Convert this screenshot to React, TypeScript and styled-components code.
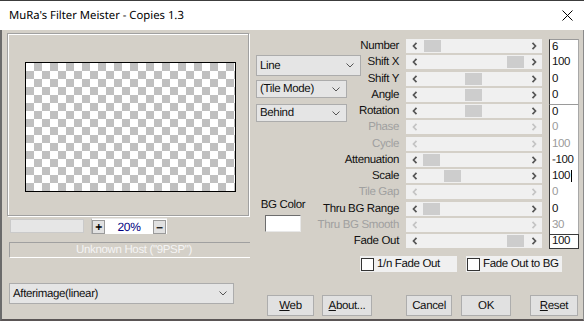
import React from "react";
import styled, { createGlobalStyle, css } from "styled-components";

const Global = createGlobalStyle`
  html, body { margin: 0; padding: 0; background: #d4d0c8; }
  body { width: 584px; height: 321px; overflow: hidden; }
  * { box-sizing: border-box; }
`;

const Window = styled.div`
  width: 584px;
  height: 321px;
  display: flex;
  flex-direction: column;
  background: #d4d0c8;
  overflow: hidden;
  font-family: "Liberation Sans", Arial, sans-serif;
  font-size: 11.5px;
  letter-spacing: -0.35px;
  text-rendering: geometricPrecision;
  color: #111;
`;

const TitleBar = styled.div`
  height: 30px;
  flex: none;
  background: #fff;
  border-top: 1px solid #3c3c3c;
  display: flex;
  align-items: center;
  justify-content: space-between;
  padding: 0 11px 0 9px;
`;

const Title = styled.span`
  font-family: "Noto Sans", sans-serif;
  font-size: 11.3px;
  letter-spacing: 0;
  color: #000;
`;

const Body = styled.div`
  flex: 1;
  display: flex;
  border-left: 2px solid #6b6b6b;
  border-right: 1px solid #8a8a8a;
  border-bottom: 2px solid #5a5555;
  padding-top: 3px;
`;

/* ---------- left column ---------- */
const LeftCol = styled.div`
  width: 243px;
  margin-left: 5px;
  flex: none;
  display: flex;
  flex-direction: column;
`;

const PreviewFrame = styled.div`
  width: 242px;
  height: 183px;
  border: 1px solid #a0a0a0;
  box-shadow: inset 1px 1px 0 #fff, 1px 1px 0 #fff;
  padding: 28px 0 0 17px;
`;

const Checker = styled.div`
  width: 211px;
  height: 130px;
  border: 1px solid #000;
  background: repeating-conic-gradient(#c0c0c0 0 25%, #fff 0 50%) 0 0 / 16px 16px;
`;

const ZoomRow = styled.div`
  margin-top: 2px;
  height: 16px;
  display: flex;
  align-items: center;
`;

const BlankField = styled.div`
  margin-left: 3px;
  width: 74px;
  height: 14px;
  background: #e6e6e6;
  border: 1px solid #cacaca;
`;

const ZoomCtl = styled.div`
  margin-left: 7px;
  width: 76px;
  height: 16px;
  background: #fff;
  border-left: 1px solid #b8b8b8;
  border-top: 1px solid #e8e8e8;
  display: flex;
  align-items: center;
  padding: 0 1px 0 0;
`;

const TinyBtn = styled.div`
  width: 13px;
  height: 14px;
  flex: none;
  background: #e1e1e1;
  border: 1px solid #9a9a9a;
  display: flex;
  align-items: center;
  justify-content: center;
  font-weight: bold;
  font-size: 12px;
  line-height: 1;
  color: #000;
`;

const ZoomText = styled.span`
  flex: 1;
  text-align: center;
  color: #000080;
  font-size: 12px;
`;

const HostField = styled.div`
  margin: 8px 0 0 2px;
  width: 241px;
  height: 16px;
  border-top: 1px solid #a0a0a0;
  border-left: 1px solid #a0a0a0;
  border-bottom: 1px solid #fff;
  color: #f4f4f4;
  text-align: center;
  line-height: 14px;
  padding-left: 8px;
  white-space: nowrap;
`;

const Select = styled.div<{ $w: number; $h: number; $mt: number; $ml?: number }>`
  width: ${(p) => p.$w}px;
  height: ${(p) => p.$h}px;
  margin-top: ${(p) => p.$mt}px;
  margin-left: ${(p) => p.$ml ?? 0}px;
  flex: none;
  background: #e5e5e5;
  border: 1px solid #acacac;
  display: flex;
  align-items: center;
  justify-content: space-between;
  padding: 0 6px 0 3px;
  white-space: nowrap;
`;

const Chevron = () => (
  <svg width="8" height="5" viewBox="0 0 8 5">
    <polyline points="0.5,0.5 4,4 7.5,0.5" fill="none" stroke="#555" strokeWidth="1" />
  </svg>
);

/* ---------- right pane ---------- */
const RightPane = styled.div`
  flex: 1;
  margin-left: 6px;
  display: flex;
  flex-direction: column;
`;

const TopArea = styled.div`
  display: flex;
`;

const MidCol = styled.div`
  width: 62px;
  flex: none;
  display: flex;
  flex-direction: column;
`;

const BgBlock = styled.div`
  margin: 76px 0 0 2px;
  width: 50px;
  display: flex;
  flex-direction: column;
  align-items: center;
`;

const BgLabel = styled.span`
  line-height: 14px;
  white-space: nowrap;
`;

const Swatch = styled.div`
  margin-top: 3px;
  width: 36px;
  height: 17px;
  background: #fff;
  border-top: 1px solid #6d6d6d;
  border-left: 1px solid #6d6d6d;
  border-right: 1px solid #e8e8e8;
  border-bottom: 1px solid #e8e8e8;
`;

const ParamGrid = styled.div`
  margin-top: 6px;
  display: grid;
  grid-template-columns: 81px 136px 30px;
  grid-auto-rows: 16.25px;
  column-gap: 7px;
`;

const Label = styled.span<{ $disabled?: boolean }>`
  justify-self: end;
  align-self: start;
  line-height: 14px;
  white-space: nowrap;
  color: ${(p) => (p.$disabled ? "#a0a0a0" : "#111")};
`;

const Scroll = styled.div`
  align-self: start;
  height: 14px;
  display: flex;
  background: #f0f0f0;
`;

const ArrowBtn = styled.div`
  width: 17px;
  flex: none;
  display: flex;
  align-items: center;
  justify-content: center;
`;

const Track = styled.div`
  flex: 1;
  display: flex;
  align-items: center;
`;

const Thumb = styled.div`
  width: 17px;
  height: 12px;
  flex: none;
  background: #cdcdcd;
`;

const ValueBox = styled.div<{ $disabled?: boolean; $top?: boolean; $boxed?: boolean }>`
  align-self: stretch;
  background: #fff;
  border-left: 1px solid #3a3a3a;
  border-right: 1px solid #a8a8a8;
  padding-left: 2px;
  line-height: 14px;
  display: flex;
  align-items: flex-start;
  color: ${(p) => (p.$disabled ? "#9a9a9a" : "#111")};
  ${(p) =>
    p.$top &&
    css`
      border-top: 1px solid #9a9a9a;
    `}
  ${(p) =>
    p.$boxed &&
    css`
      align-self: start;
      height: 15px;
      border: 1px solid #3a3a3a;
      line-height: 13px;
    `}
`;

const Caret = styled.span`
  display: inline-block;
  width: 1px;
  height: 12px;
  margin: 1px 0 0 0.5px;
  background: #000;
`;

const CheckRow = styled.div`
  margin-top: 6px;
  padding-left: 104px;
  display: flex;
  gap: 9px;
`;

const CheckItem = styled.div<{ $w: number }>`
  width: ${(p) => p.$w}px;
  height: 16px;
  background: #f0f0f0;
  display: flex;
  align-items: center;
  padding-left: 1px;
  gap: 3px;
  white-space: nowrap;
`;

const Box = styled.span`
  width: 13px;
  height: 13px;
  flex: none;
  background: #fff;
  border: 1px solid #333;
`;

const ButtonRow = styled.div`
  margin-top: 23px;
  padding-left: 11px;
  display: flex;
`;

const Btn = styled.div<{ $w: number; $ml: number }>`
  width: ${(p) => p.$w}px;
  margin-left: ${(p) => p.$ml}px;
  height: 21px;
  flex: none;
  background: #e1e1e1;
  border: 1px solid #adadad;
  display: flex;
  align-items: center;
  justify-content: center;
  u { text-decoration: underline; }
`;

const LeftArrow = ({ off }: { off?: boolean }) => (
  <svg width="6" height="8" viewBox="0 0 6 8">
    <polyline points="4.5,0.8 1.5,4 4.5,7.2" fill="none" stroke={off ? "#c4c4c4" : "#555"} strokeWidth="1.7" />
  </svg>
);
const RightArrow = ({ off }: { off?: boolean }) => (
  <svg width="6" height="8" viewBox="0 0 6 8">
    <polyline points="1.5,0.8 4.5,4 1.5,7.2" fill="none" stroke={off ? "#c4c4c4" : "#555"} strokeWidth="1.7" />
  </svg>
);

type Param = {
  label: string;
  value: string;
  pos?: number;
  disabled?: boolean;
  top?: boolean;
  boxed?: boolean;
  caret?: boolean;
};

const params: Param[] = [
  { label: "Number", value: "6", pos: 1, top: true },
  { label: "Shift X", value: "100", pos: 84 },
  { label: "Shift Y", value: "0", pos: 42 },
  { label: "Angle", value: "0", pos: 42 },
  { label: "Rotation", value: "0", pos: 42, top: true },
  { label: "Phase", value: "0", disabled: true },
  { label: "Cycle", value: "100", disabled: true },
  { label: "Attenuation", value: "-100", pos: 0 },
  { label: "Scale", value: "100", pos: 21, caret: true },
  { label: "Tile Gap", value: "0", disabled: true },
  { label: "Thru BG Range", value: "0", pos: 0 },
  { label: "Thru BG Smooth", value: "30", disabled: true },
  { label: "Fade Out", value: "100", pos: 84, boxed: true },
];

export default function App() {
  return (
    <>
      <Global />
      <Window>
        <TitleBar>
          <Title>MuRa's Filter Meister - Copies 1.3</Title>
          <svg width="11" height="11" viewBox="0 0 11 11">
            <line x1="0.5" y1="0.5" x2="10.5" y2="10.5" stroke="#000" strokeWidth="1" />
            <line x1="10.5" y1="0.5" x2="0.5" y2="10.5" stroke="#000" strokeWidth="1" />
          </svg>
        </TitleBar>
        <Body>
          <LeftCol>
            <PreviewFrame>
              <Checker />
            </PreviewFrame>
            <ZoomRow>
              <BlankField />
              <ZoomCtl>
                <TinyBtn>+</TinyBtn>
                <ZoomText>20%</ZoomText>
                <TinyBtn>–</TinyBtn>
              </ZoomCtl>
            </ZoomRow>
            <HostField>Unknown Host ("9PSP")</HostField>
            <Select $w={225} $h={21} $mt={25} $ml={2}>
              <span>Afterimage(linear)</span>
              <Chevron />
            </Select>
          </LeftCol>
          <RightPane>
            <TopArea>
              <MidCol>
                <Select $w={105} $h={21} $mt={22}>
                  <span>Line</span>
                  <Chevron />
                </Select>
                <Select $w={91} $h={18} $mt={4}>
                  <span>(Tile Mode)</span>
                  <Chevron />
                </Select>
                <Select $w={91} $h={18} $mt={6}>
                  <span>Behind</span>
                  <Chevron />
                </Select>
                <BgBlock>
                  <BgLabel>BG Color</BgLabel>
                  <Swatch />
                </BgBlock>
              </MidCol>
              <ParamGrid>
                {params.map((p) => (
                  <React.Fragment key={p.label}>
                    <Label $disabled={p.disabled}>{p.label}</Label>
                    <Scroll>
                      <ArrowBtn>
                        <LeftArrow off={p.disabled} />
                      </ArrowBtn>
                      <Track>
                        {!p.disabled && <Thumb style={{ marginLeft: p.pos ?? 0 }} />}
                      </Track>
                      <ArrowBtn>
                        <RightArrow off={p.disabled} />
                      </ArrowBtn>
                    </Scroll>
                    <ValueBox $disabled={p.disabled} $top={p.top} $boxed={p.boxed}>
                      {p.value}
                      {p.caret && <Caret />}
                    </ValueBox>
                  </React.Fragment>
                ))}
              </ParamGrid>
            </TopArea>
            <CheckRow>
              <CheckItem $w={97}>
                <Box />
                1/n Fade Out
              </CheckItem>
              <CheckItem $w={96}>
                <Box />
                Fade Out to BG
              </CheckItem>
            </CheckRow>
            <ButtonRow>
              <Btn $w={47} $ml={0}>
                <span>
                  <u>W</u>eb
                </span>
              </Btn>
              <Btn $w={50} $ml={8}>
                <span>
                  <u>A</u>bout...
                </span>
              </Btn>
              <Btn $w={46} $ml={34}>
                Cancel
              </Btn>
              <Btn $w={50} $ml={9}>
                OK
              </Btn>
              <Btn $w={48} $ml={19}>
                <span>
                  <u>R</u>eset
                </span>
              </Btn>
            </ButtonRow>
          </RightPane>
        </Body>
      </Window>
    </>
  );
}
